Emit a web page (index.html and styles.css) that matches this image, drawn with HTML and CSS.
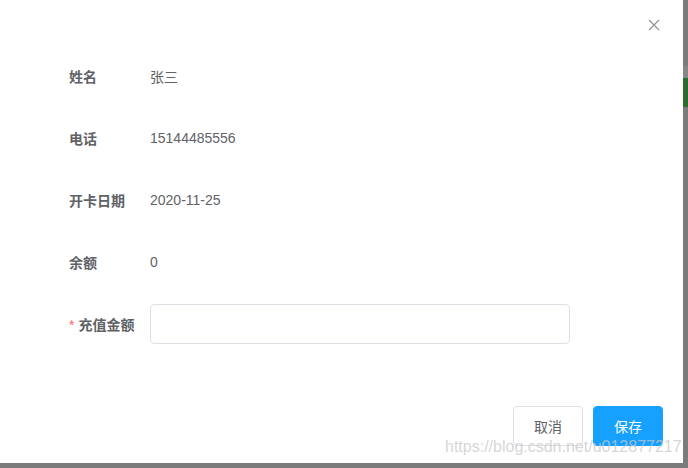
FILE: index.html
```html
<!DOCTYPE html>
<html lang="zh-CN">
<head>
<meta charset="utf-8">
<title>充值</title>
<link rel="stylesheet" href="styles.css">
</head>
<body>
<div class="screen">
  <div class="dialog">
    <div class="dialog-header">
      <button class="close" aria-label="关闭">
        <svg width="12" height="12" viewBox="0 0 12 12"><path d="M1 1 L11 11 M11 1 L1 11" stroke="#909399" stroke-width="1.2" fill="none"/></svg>
      </button>
    </div>
    <div class="form">
      <div class="row"><div class="label">姓名</div><div class="value">张三</div></div>
      <div class="row"><div class="label">电话</div><div class="value num">15144485556</div></div>
      <div class="row"><div class="label">开卡日期</div><div class="value num">2020-11-25</div></div>
      <div class="row"><div class="label">余额</div><div class="value num">0</div></div>
      <div class="row"><div class="label"><span class="req">*</span>充值金额</div><div class="value"><input class="input" type="text"></div></div>
    </div>
    <div class="footer">
      <button class="btn">取消</button>
      <button class="btn primary">保存</button>
    </div>
    <div class="watermark">https://blog.csdn.net/u012877217</div>
  </div>
  <div class="side">
    <div class="seg s1"></div>
    <div class="seg s2"></div>
    <div class="seg s3"></div>
    <div class="seg s4"></div>
  </div>
</div>
</body>
</html>
```
FILE: styles.css
```css
html, body {
  margin: 0;
  padding: 0;
  background: #7b7b7b;
}
.screen {
  display: flex;
  width: 688px;
  height: 468px;
  align-items: flex-start;
}
.dialog {
  position: relative;
  width: 683px;
  height: 463px;
  background: #fff;
  font-family: "Liberation Sans", "Noto Sans CJK SC", sans-serif;
  font-size: 14px;
  color: #606266;
  box-sizing: border-box;
}
.dialog-header {
  height: 56px;
  display: flex;
  justify-content: flex-end;
  align-items: flex-start;
  padding: 19px 23px 0 0;
  box-sizing: border-box;
}
.close {
  border: 0;
  background: none;
  padding: 0;
  width: 12px;
  height: 12px;
  display: flex;
  cursor: pointer;
}
.form {
  padding-left: 69px;
  display: flex;
  flex-direction: column;
  gap: 22px;
}
.row {
  display: flex;
  height: 40px;
  align-items: center;
}
.label {
  width: 81px;
  font-weight: bold;
  color: #606266;
  font-family: "Noto Sans CJK SC", sans-serif;
  font-size: 14px;
}
.req {
  color: #f56c6c;
  margin-right: 4px;
  font-family: "Liberation Sans", sans-serif;
  font-weight: normal;
}
.value {
  font-family: "Noto Sans CJK SC", sans-serif;
}
.value.num {
  font-family: "Liberation Sans", sans-serif;
}
.input {
  width: 420px;
  height: 40px;
  box-sizing: border-box;
  border: 1px solid #dcdfe6;
  border-radius: 4px;
  outline: none;
  padding: 0 15px;
  font-size: 14px;
  display: block;
}
.footer {
  display: flex;
  justify-content: flex-end;
  gap: 10px;
  padding: 62px 20px 0 0;
}
.btn {
  width: 70px;
  height: 40px;
  border: 1px solid #dcdfe6;
  border-radius: 4px;
  background: #fff;
  color: #606266;
  font-family: "Noto Sans CJK SC", sans-serif;
  font-size: 14px;
  padding: 0;
  cursor: pointer;
}
.btn.primary {
  background: #16a0ff;
  border-color: #16a0ff;
  color: #fff;
}
.watermark {
  position: absolute;
  left: 445px;
  top: 438px;
  font-family: "Liberation Sans", sans-serif;
  font-size: 16px;
  color: rgba(200, 200, 200, 0.75);
  white-space: nowrap;
  pointer-events: none;
}
.side {
  width: 5px;
  display: flex;
  flex-direction: column;
}
.seg.s1 { height: 66px; background: #7c7c7c; }
.seg.s2 { height: 12px; background: #868686; }
.seg.s3 { height: 29px; background: #2f6a33; }
.seg.s4 { height: 361px; background: #7b7b7b; }
```
